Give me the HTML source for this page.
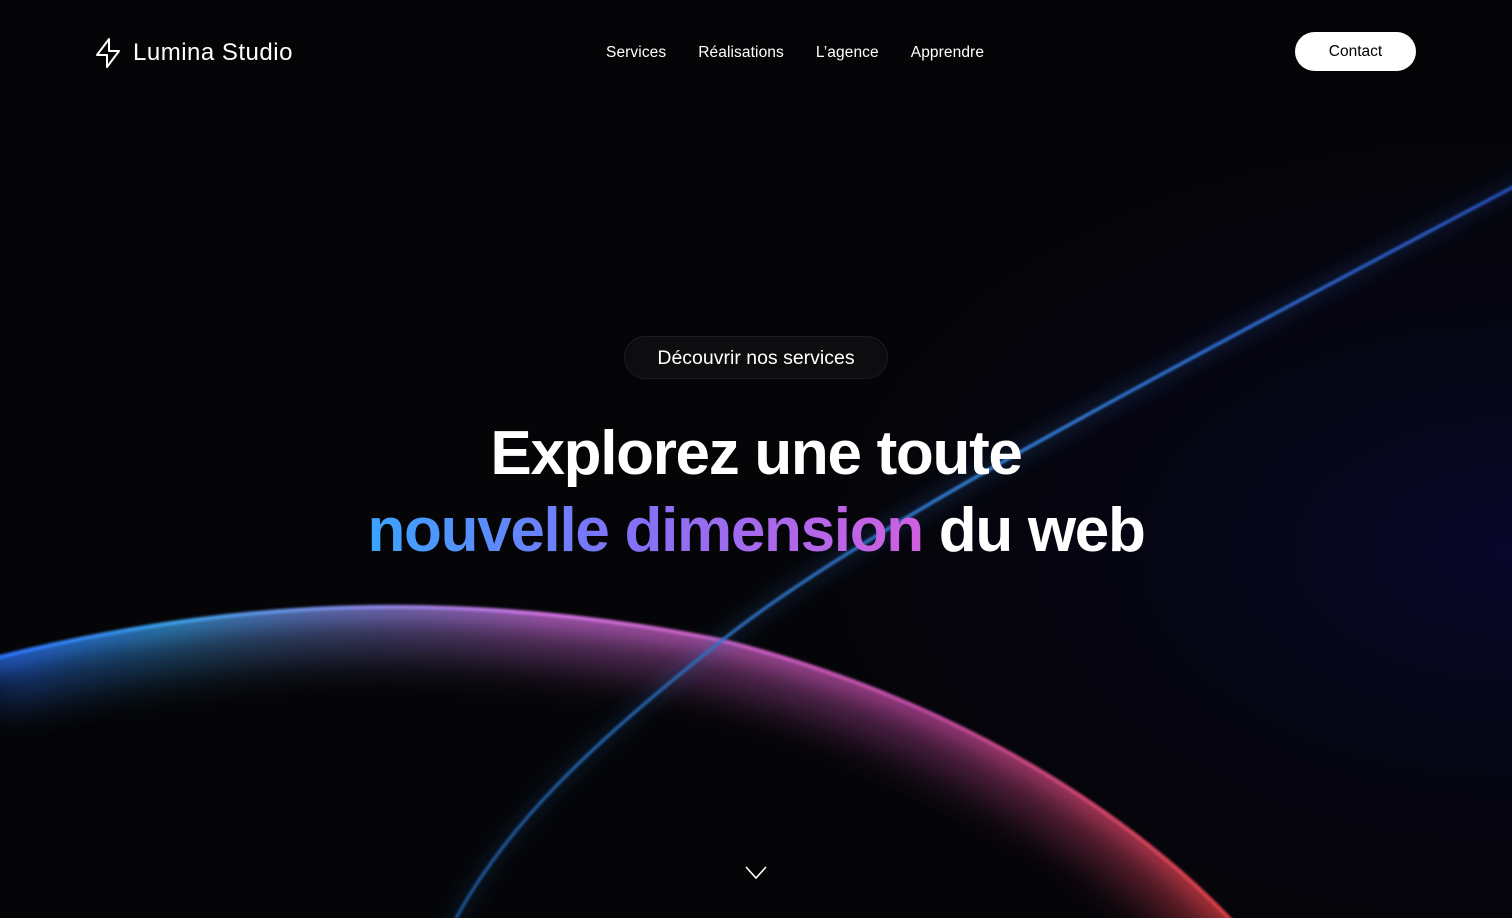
<!DOCTYPE html>
<html><head><meta charset="utf-8"><style>
html,body{margin:0;padding:0;width:1512px;height:918px;overflow:hidden;background:#050507;font-family:"Liberation Sans",sans-serif;color:#fff}
.bg{position:absolute;left:0;top:0}
.logo{position:absolute;left:95px;top:37px;display:flex;align-items:center;gap:10px;font-size:24px;letter-spacing:0.5px}
nav{position:absolute;top:44px;left:606px;display:flex;gap:32px;font-size:15.5px;letter-spacing:0.1px}
.contact{position:absolute;left:1295px;top:32px;width:121px;height:39px;border-radius:20px;background:#fff;color:#000;font-size:15.5px;display:flex;align-items:center;justify-content:center}
.pill{position:absolute;left:624px;top:336px;width:264px;height:43px;border-radius:22px;background:#0d0d10;border:1px solid #1c1c20;box-sizing:border-box;display:flex;align-items:center;justify-content:center;font-size:19.5px;padding-top:2px}
h1{position:absolute;top:415px;left:0;width:1512px;text-align:center;margin:0;font-size:62px;font-weight:700;line-height:77px;letter-spacing:-1.3px}
.g{background:linear-gradient(90deg,#3aa4ff 0%,#7f72f7 45%,#d25fe0 100%);-webkit-background-clip:text;background-clip:text;color:transparent}
</style></head><body>
<svg class="bg" width="1512" height="918" viewBox="0 0 1512 918">
<defs>
<linearGradient id="a" x1="0" y1="0" x2="1" y2="0" gradientUnits="objectBoundingBox">
<stop offset="0" stop-color="#2a6cff"/><stop offset="0.15" stop-color="#3aa0e8"/><stop offset="0.45" stop-color="#d070e0"/><stop offset="0.75" stop-color="#c04aa0"/><stop offset="1" stop-color="#e04040"/>
</linearGradient>
<linearGradient id="b" x1="0" y1="0" x2="1" y2="0">
<stop offset="0" stop-color="#1e5aa0"/><stop offset="0.5" stop-color="#3a8ef0"/><stop offset="1" stop-color="#2a5ad0"/>
</linearGradient>
<radialGradient id="r" cx="1" cy="0.6" r="0.6"><stop offset="0" stop-color="#08062a"/><stop offset="1" stop-color="#050507" stop-opacity="0"/></radialGradient>
<filter id="f1" x="-20%" y="-20%" width="140%" height="140%"><feGaussianBlur stdDeviation="10"/></filter>
<filter id="f3" x="-20%" y="-20%" width="140%" height="140%"><feGaussianBlur stdDeviation="22"/></filter>
<filter id="f2"><feGaussianBlur stdDeviation="1.2"/></filter>
<clipPath id="c"><path d="M -20 662 C 180 610, 420 580, 720 640 C 960 700, 1140 820, 1240 930 L -20 930 Z"/></clipPath>
</defs>
<rect width="1512" height="918" fill="url(#r)"/>
<g clip-path="url(#c)">
<path d="M -20 662 C 180 610, 420 580, 720 640 C 960 700, 1140 820, 1240 930" fill="none" stroke="url(#a)" stroke-width="90" opacity="0.45" filter="url(#f3)"/>
<path d="M -20 662 C 180 610, 420 580, 720 640 C 960 700, 1140 820, 1240 930" fill="none" stroke="url(#a)" stroke-width="24" opacity="0.6" filter="url(#f1)"/>
</g>
<path d="M -20 662 C 180 610, 420 580, 720 640 C 960 700, 1140 820, 1240 930" fill="none" stroke="url(#a)" stroke-width="4" filter="url(#f2)"/>
<path d="M 1530 178 C 1150 380, 860 530, 720 642 C 590 745, 500 830, 450 930" fill="none" stroke="url(#b)" stroke-width="7" opacity="0.4" filter="url(#f1)"/>
<path d="M 1530 178 C 1150 380, 860 530, 720 642 C 590 745, 500 830, 450 930" fill="none" stroke="url(#b)" stroke-width="3" filter="url(#f2)"/>
<path d="M746 867 L756 878 L766 867" fill="none" stroke="#fff" stroke-width="1.6"/>
</svg>
<div class="logo"><svg width="28" height="32" viewBox="0 0 28 32" fill="none" stroke="#fff" stroke-width="2" stroke-linejoin="round"><path d="M14 2 L14 14 L24 14 L12 30 L12 18 L2 18 Z"/></svg>Lumina Studio</div>
<nav><span>Services</span><span>Réalisations</span><span>L’agence</span><span>Apprendre</span></nav>
<div class="contact">Contact</div>
<div class="pill">Découvrir nos services</div>
<h1>Explorez une toute<br><span class="g">nouvelle dimension</span> du web</h1>
</body></html>
